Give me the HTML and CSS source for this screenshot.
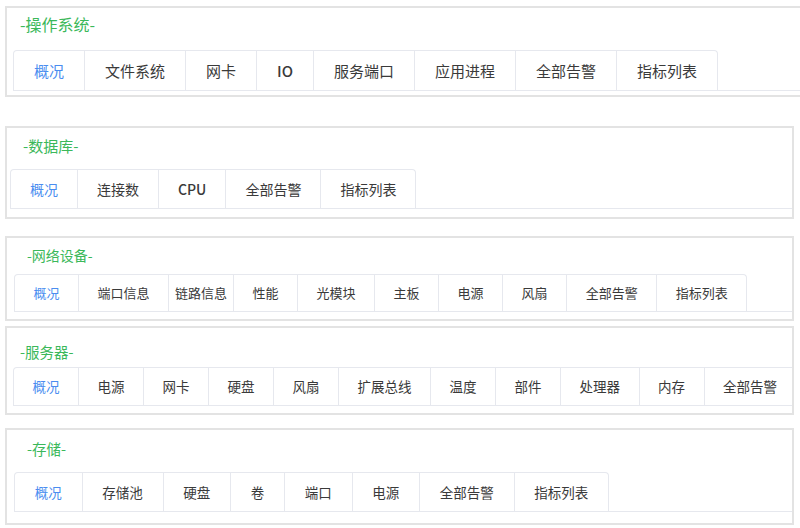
FILE: index.html
```html
<!DOCTYPE html>
<html lang="zh-CN">
<head>
    <meta charset="UTF-8">
    <meta name="viewport" content="width=device-width, initial-scale=1.0">
    <title>监控分类</title>
    <link rel="stylesheet" href="styles.css">
</head>
<body>

<section class="panel panel-os">
    <div class="panel-title">-操作系统-</div>
    <div class="tabs">
        <div class="tabs-nav">
            <div class="tab active">概况</div>
            <div class="tab">文件系统</div>
            <div class="tab">网卡</div>
            <div class="tab latin">IO</div>
            <div class="tab">服务端口</div>
            <div class="tab">应用进程</div>
            <div class="tab">全部告警</div>
            <div class="tab">指标列表</div>
        </div>
    </div>
</section>

<section class="panel panel-db">
    <div class="panel-title">-数据库-</div>
    <div class="tabs">
        <div class="tabs-nav">
            <div class="tab active">概况</div>
            <div class="tab">连接数</div>
            <div class="tab latin">CPU</div>
            <div class="tab">全部告警</div>
            <div class="tab">指标列表</div>
        </div>
    </div>
</section>

<section class="panel panel-net">
    <div class="panel-title">-网络设备-</div>
    <div class="tabs">
        <div class="tabs-nav">
            <div class="tab active">概况</div>
            <div class="tab">端口信息</div>
            <div class="tab tight">链路信息</div>
            <div class="tab">性能</div>
            <div class="tab">光模块</div>
            <div class="tab">主板</div>
            <div class="tab">电源</div>
            <div class="tab">风扇</div>
            <div class="tab">全部告警</div>
            <div class="tab">指标列表</div>
        </div>
    </div>
</section>

<section class="panel panel-server">
    <div class="panel-title">-服务器-</div>
    <div class="tabs">
        <div class="tabs-nav">
            <div class="tab active">概况</div>
            <div class="tab">电源</div>
            <div class="tab">网卡</div>
            <div class="tab">硬盘</div>
            <div class="tab">风扇</div>
            <div class="tab">扩展总线</div>
            <div class="tab">温度</div>
            <div class="tab">部件</div>
            <div class="tab">处理器</div>
            <div class="tab">内存</div>
            <div class="tab">全部告警</div>
        </div>
    </div>
</section>

<section class="panel panel-storage">
    <div class="panel-title">-存储-</div>
    <div class="tabs">
        <div class="tabs-nav">
            <div class="tab active">概况</div>
            <div class="tab">存储池</div>
            <div class="tab">硬盘</div>
            <div class="tab">卷</div>
            <div class="tab">端口</div>
            <div class="tab">电源</div>
            <div class="tab">全部告警</div>
            <div class="tab">指标列表</div>
        </div>
    </div>
</section>

</body>
</html>
```

FILE: styles.css
```css
body {
    margin: 0;
    padding: 0 0 0 5px;
    background-color: #fff;
    font-family: "Noto Sans CJK SC", "Microsoft YaHei", sans-serif;
    overflow: hidden;
}

.panel {
    box-sizing: border-box;
    width: 789px;
    border: 2px solid #e3e3e3;
    background-color: #fff;
    overflow: hidden;
}

.panel-title {
    color: #3bb85a;
    line-height: 30px;
}

.tabs {
    border-bottom: 1px solid #e6e8ee;
    overflow: hidden;
}

.tabs-nav {
    display: inline-flex;
    border: 1px solid #e6e8ee;
    border-bottom: none;
    border-radius: 4px 4px 0 0;
}

.tab {
    flex-shrink: 0;
    border-left: 1px solid #e6e8ee;
    color: #3a3a3a;
    white-space: nowrap;
}

.tab:first-child {
    border-left: none;
}

.tab.active {
    color: #4a8df0;
}

.tab.latin {
    font-weight: 500;
}

.tab.tight {
    padding: 0 6px !important;
}

/* 操作系统 */
.panel-os {
    width: 800px;
    margin-top: 6px;
    padding: 1px 0 4px;
}

.panel-os .panel-title {
    font-size: 16px;
    padding-left: 13px;
    margin-bottom: 11px;
}

.panel-os .tabs {
    margin-left: 6px;
}

.panel-os .tab {
    font-size: 15px;
    line-height: 39px;
    padding: 0 20px;
}

/* 数据库 */
.panel-db {
    margin-top: 29px;
    padding: 3px 0 8px;
}

.panel-db .panel-title {
    font-size: 15px;
    padding-left: 16px;
    margin-bottom: 8px;
}

.panel-db .tabs {
    margin-left: 3px;
}

.panel-db .tab {
    font-size: 14px;
    line-height: 38px;
    padding: 0 19px;
}

/* 网络设备 */
.panel-net {
    margin-top: 17px;
    padding: 2px 0 7px;
}

.panel-net .panel-title {
    font-size: 14px;
    padding-left: 20px;
    margin-bottom: 4px;
}

.panel-net .tabs {
    margin-left: 7px;
}

.panel-net .tab {
    font-size: 13px;
    line-height: 36px;
    padding: 0 18.5px;
}

/* 服务器 */
.panel-server {
    margin-top: 5px;
    padding: 11px 0 7px;
}

.panel-server .panel-title {
    font-size: 14.5px;
    line-height: 26px;
    padding-left: 13px;
    margin-bottom: 2px;
}

.panel-server .tabs {
    margin-left: 6px;
}

.panel-server .tab {
    font-size: 13.5px;
    line-height: 37px;
    padding: 0 18.5px;
}

/* 存储 */
.panel-storage {
    margin-top: 13px;
    padding: 4px 0 11px;
}

.panel-storage .panel-title {
    font-size: 14.5px;
    padding-left: 20px;
    margin-bottom: 8px;
}

.panel-storage .tabs {
    margin-left: 7px;
}

.panel-storage .tab {
    font-size: 13.5px;
    line-height: 38px;
    padding: 0 19.75px;
}
```
